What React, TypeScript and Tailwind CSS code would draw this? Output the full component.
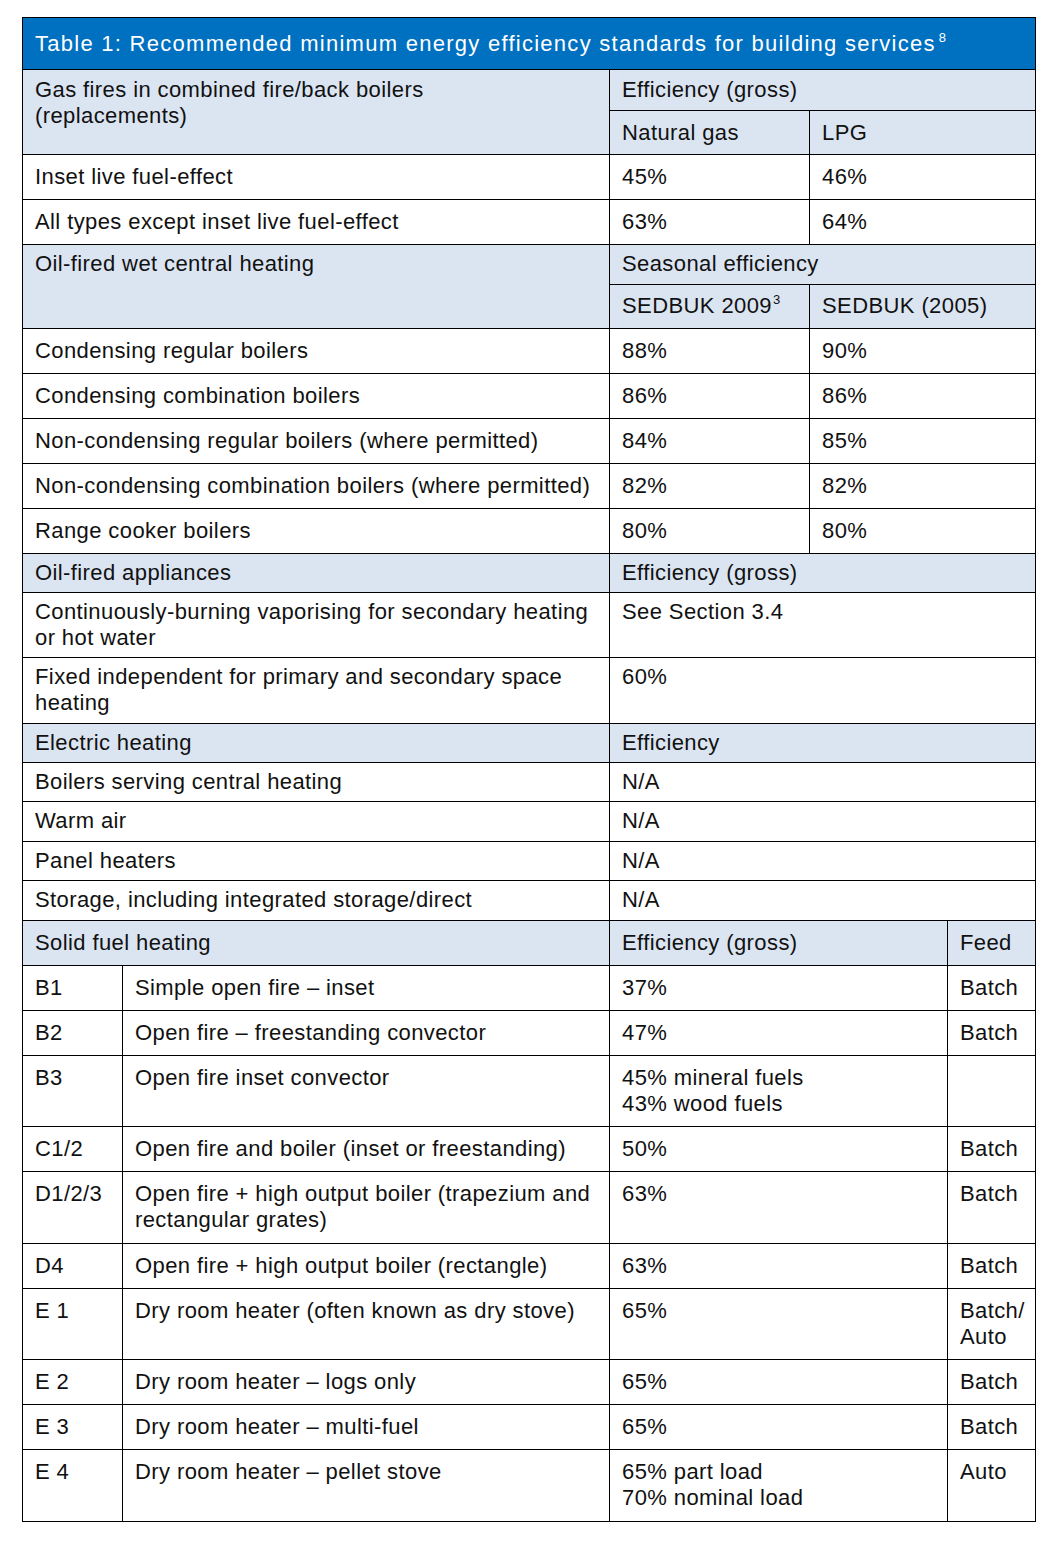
import React from "react";

const B = "border border-black align-top pl-[12px] pr-[6px]";
const HB = "bg-[#dbe5f1]";

type SimpleRow = { label: React.ReactNode; a: string; b: string };

function Sup({ children, ml }: { children: React.ReactNode; ml: string }) {
  return <sup className={`text-[13px] tracking-normal top-[-9px] ${ml}`}>{children}</sup>;
}

function App() {
  const gasRows: SimpleRow[] = [
    { label: "Inset live fuel-effect", a: "45%", b: "46%" },
    { label: "All types except inset live fuel-effect", a: "63%", b: "64%" },
  ];
  const oilRows: SimpleRow[] = [
    { label: "Condensing regular boilers", a: "88%", b: "90%" },
    { label: "Condensing combination boilers", a: "86%", b: "86%" },
    { label: "Non-condensing regular boilers (where permitted)", a: "84%", b: "85%" },
    { label: "Non-condensing combination boilers (where permitted)", a: "82%", b: "82%" },
    { label: "Range cooker boilers", a: "80%", b: "80%" },
  ];
  const elecRows = [
    "Boilers serving central heating",
    "Warm air",
    "Panel heaters",
    "Storage, including integrated storage/direct",
  ];
  const solid: { code: string; desc: string; eff: React.ReactNode; feed: React.ReactNode; h: string }[] = [
    { code: "B1", desc: "Simple open fire – inset", eff: "37%", feed: "Batch", h: "h-[45px]" },
    { code: "B2", desc: "Open fire – freestanding convector", eff: "47%", feed: "Batch", h: "h-[45px]" },
    { code: "B3", desc: "Open fire inset convector", eff: <>45% mineral fuels<br />43% wood fuels</>, feed: "", h: "h-[71px]" },
    { code: "C1/2", desc: "Open fire and boiler (inset or freestanding)", eff: "50%", feed: "Batch", h: "h-[45px]" },
    { code: "D1/2/3", desc: "Open fire + high output boiler (trapezium and rectangular grates)", eff: "63%", feed: "Batch", h: "h-[72px]" },
    { code: "D4", desc: "Open fire + high output boiler (rectangle)", eff: "63%", feed: "Batch", h: "h-[45px]" },
    { code: "E 1", desc: "Dry room heater (often known as dry stove)", eff: "65%", feed: <>Batch/<br />Auto</>, h: "h-[71px]" },
    { code: "E 2", desc: "Dry room heater – logs only", eff: "65%", feed: "Batch", h: "h-[45px]" },
    { code: "E 3", desc: "Dry room heater – multi-fuel", eff: "65%", feed: "Batch", h: "h-[45px]" },
    { code: "E 4", desc: "Dry room heater – pellet stove", eff: <>65% part load<br />70% nominal load</>, feed: "Auto", h: "h-[72px]" },
  ];

  return (
    <div className="bg-white min-h-[1548px] pt-[17px] pl-[22px] font-['Liberation_Sans',Arial,sans-serif] text-[22px] leading-[26px] tracking-[0.4px] text-[#111111]">
      <table className="table-fixed border-collapse w-[1013px]">
        <colgroup>
          <col className="w-[100px]" />
          <col className="w-[487px]" />
          <col className="w-[200px]" />
          <col className="w-[138px]" />
          <col className="w-[88px]" />
        </colgroup>
        <tbody>
          <tr className="h-[52px]">
            <td colSpan={5} className="border border-black bg-[#0070c0] text-white pl-[12px] align-middle tracking-[1.27px] whitespace-nowrap">
              Table 1: Recommended minimum energy efficiency standards for building services
              <Sup ml="ml-[3px]">8</Sup>
            </td>
          </tr>

          <tr className="h-[41px]">
            <td rowSpan={2} colSpan={2} className={`${B} ${HB} pt-[7px]`}>
              Gas fires in combined fire/back boilers
              <br />
              (replacements)
            </td>
            <td colSpan={3} className={`${B} ${HB} pt-[7px]`}>Efficiency (gross)</td>
          </tr>
          <tr className="h-[44px]">
            <td className={`${B} ${HB} pt-[9px]`}>Natural gas</td>
            <td colSpan={2} className={`${B} ${HB} pt-[9px]`}>LPG</td>
          </tr>
          {gasRows.map((r, i) => (
            <tr key={i} className="h-[45px]">
              <td colSpan={2} className={`${B} pt-[9px]`}>{r.label}</td>
              <td className={`${B} pt-[9px]`}>{r.a}</td>
              <td colSpan={2} className={`${B} pt-[9px]`}>{r.b}</td>
            </tr>
          ))}

          <tr className="h-[40px]">
            <td rowSpan={2} colSpan={2} className={`${B} ${HB} pt-[6px]`}>Oil-fired wet central heating</td>
            <td colSpan={3} className={`${B} ${HB} pt-[6px]`}>Seasonal efficiency</td>
          </tr>
          <tr className="h-[44px]">
            <td className={`${B} ${HB} pt-[8px]`}>
              SEDBUK 2009<Sup ml="ml-[1px]">3</Sup>
            </td>
            <td colSpan={2} className={`${B} ${HB} pt-[8px]`}>SEDBUK (2005)</td>
          </tr>
          {oilRows.map((r, i) => (
            <tr key={i} className="h-[45px]">
              <td colSpan={2} className={`${B} pt-[9px]`}>{r.label}</td>
              <td className={`${B} pt-[9px]`}>{r.a}</td>
              <td colSpan={2} className={`${B} pt-[9px]`}>{r.b}</td>
            </tr>
          ))}

          <tr className="h-[39px]">
            <td colSpan={2} className={`${B} ${HB} pt-[6px]`}>Oil-fired appliances</td>
            <td colSpan={3} className={`${B} ${HB} pt-[6px]`}>Efficiency (gross)</td>
          </tr>
          <tr className="h-[65px]">
            <td colSpan={2} className={`${B} pt-[6px]`}>
              Continuously-burning vaporising for secondary heating or hot water
            </td>
            <td colSpan={3} className={`${B} pt-[6px]`}>See Section 3.4</td>
          </tr>
          <tr className="h-[66px]">
            <td colSpan={2} className={`${B} pt-[6px]`}>
              Fixed independent for primary and secondary space heating
            </td>
            <td colSpan={3} className={`${B} pt-[6px]`}>60%</td>
          </tr>

          <tr className="h-[39px]">
            <td colSpan={2} className={`${B} ${HB} pt-[6px]`}>Electric heating</td>
            <td colSpan={3} className={`${B} ${HB} pt-[6px]`}>Efficiency</td>
          </tr>
          {elecRows.map((l, i) => (
            <tr key={i} className={i % 2 === 0 ? "h-[39px]" : "h-[40px]"}>
              <td colSpan={2} className={`${B} pt-[6px]`}>{l}</td>
              <td colSpan={3} className={`${B} pt-[6px]`}>N/A</td>
            </tr>
          ))}

          <tr className="h-[45px]">
            <td colSpan={2} className={`${B} ${HB} pt-[9px]`}>Solid fuel heating</td>
            <td colSpan={2} className={`${B} ${HB} pt-[9px]`}>Efficiency (gross)</td>
            <td className={`${B} ${HB} pt-[9px]`}>Feed</td>
          </tr>
          {solid.map((r, i) => (
            <tr key={i} className={r.h}>
              <td className={`${B} pt-[9px]`}>{r.code}</td>
              <td className={`${B} pt-[9px]`}>{r.desc}</td>
              <td colSpan={2} className={`${B} pt-[9px]`}>{r.eff}</td>
              <td className={`${B} pt-[9px] pr-[2px]`}>{r.feed}</td>
            </tr>
          ))}
        </tbody>
      </table>
    </div>
  );
}

export default App;
